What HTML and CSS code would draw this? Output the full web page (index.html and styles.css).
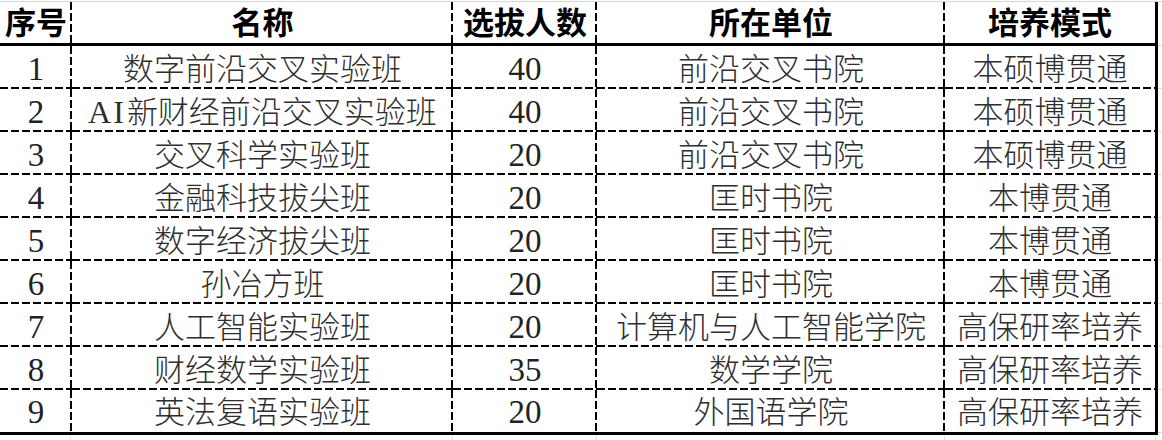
FILE: index.html
```html
<!DOCTYPE html>
<html lang="zh-CN">
<head>
<meta charset="utf-8">
<title>实验班</title>
<link rel="stylesheet" href="styles.css">
</head>
<body>
<div class="sheet">
  <div class="main">
    <div class="table">
      <div class="c h">序号</div>
      <div class="c h">名称</div>
      <div class="c h">选拔人数</div>
      <div class="c h">所在单位</div>
      <div class="c h lc">培养模式</div>

      <div class="c n">1</div>
      <div class="c">数字前沿交叉实验班</div>
      <div class="c n">40</div>
      <div class="c">前沿交叉书院</div>
      <div class="c lc">本硕博贯通</div>

      <div class="c n">2</div>
      <div class="c"><span class="latin">AI</span>新财经前沿交叉实验班</div>
      <div class="c n">40</div>
      <div class="c">前沿交叉书院</div>
      <div class="c lc">本硕博贯通</div>

      <div class="c n">3</div>
      <div class="c">交叉科学实验班</div>
      <div class="c n">20</div>
      <div class="c">前沿交叉书院</div>
      <div class="c lc">本硕博贯通</div>

      <div class="c n">4</div>
      <div class="c">金融科技拔尖班</div>
      <div class="c n">20</div>
      <div class="c">匡时书院</div>
      <div class="c lc">本博贯通</div>

      <div class="c n">5</div>
      <div class="c">数字经济拔尖班</div>
      <div class="c n">20</div>
      <div class="c">匡时书院</div>
      <div class="c lc">本博贯通</div>

      <div class="c n">6</div>
      <div class="c">孙冶方班</div>
      <div class="c n">20</div>
      <div class="c">匡时书院</div>
      <div class="c lc">本博贯通</div>

      <div class="c n">7</div>
      <div class="c">人工智能实验班</div>
      <div class="c n">20</div>
      <div class="c">计算机与人工智能学院</div>
      <div class="c lc">高保研率培养</div>

      <div class="c n">8</div>
      <div class="c">财经数学实验班</div>
      <div class="c n">35</div>
      <div class="c">数学学院</div>
      <div class="c lc">高保研率培养</div>

      <div class="c n lr">9</div>
      <div class="c lr">英法复语实验班</div>
      <div class="c n lr">20</div>
      <div class="c lr">外国语学院</div>
      <div class="c lr lc">高保研率培养</div>
    </div>
    <div class="filler"></div>
  </div>
  <div class="below">
    <div class="g g1"></div>
    <div class="g g2"></div>
    <div class="g g3"></div>
    <div class="g g4"></div>
    <div class="g g5"></div>
  </div>
</div>
</body>
</html>
```

FILE: styles.css
```css
html, body {
  margin: 0;
  padding: 0;
  background: #fff;
}

body {
  width: 1162px;
  height: 440px;
  overflow: hidden;
}

.sheet {
  display: flex;
  flex-direction: column;
  padding-top: 1px;
}

.main {
  display: flex;
  border-top: 1px solid #d6d6d6;
}

.table {
  display: grid;
  grid-template-columns: 72px 381px 144px 348px 213px;
  grid-template-rows: 44px repeat(8, 43px) 45px;
}

.c {
  box-sizing: border-box;
  display: flex;
  align-items: center;
  justify-content: center;
  padding-top: 3px;
  white-space: nowrap;
  font-family: "Liberation Serif", "Noto Sans CJK SC", serif;
  font-size: 31px;
  font-weight: 300;
  line-height: 1;
  color: #2e2e2e;
  background:
    repeating-linear-gradient(to bottom, #000 0 8px, transparent 8px 11px) right top / 2px 100% no-repeat,
    repeating-linear-gradient(to right, #000 0 8px, transparent 8px 11px) left bottom / 100% 2px no-repeat;
}

.c.n {
  font-size: 33px;
  font-weight: 400;
  color: #222;
}

.latin {
  font-weight: 400;
  font-size: 32px;
  letter-spacing: 2px;
  margin-right: 1px;
}

.c.h {
  font-weight: 700;
  color: #000;
  border-bottom: 3px solid #000;
  padding-top: 2px;
  background:
    repeating-linear-gradient(to bottom, #000 0 8px, transparent 8px 11px) right top / 2px 100% no-repeat;
}

.c.lr {
  border-bottom: 3px solid #000;
  background:
    repeating-linear-gradient(to bottom, #000 0 8px, transparent 8px 11px) right top / 2px 100% no-repeat;
}

.c.lc {
  border-right: 3px solid #000;
  background:
    repeating-linear-gradient(to right, #000 0 8px, transparent 8px 11px) left bottom / 100% 2px no-repeat;
}

.c.h.lc,
.c.lr.lc {
  background: none;
}

.filler {
  flex: 1;
  background: repeating-linear-gradient(to bottom, transparent 0 42px, #dcdcdc 42px 43px) left 1px / 100% 100% no-repeat;
}

.below {
  display: flex;
  height: 10px;
}

.g {
  box-sizing: border-box;
  height: 100%;
  border-right: 1px solid #e2e2e2;
}

.g1 { width: 71px; }
.g2 { width: 382px; }
.g3 { width: 144px; }
.g4 { width: 348px; }
.g5 { width: 211px; }
```
